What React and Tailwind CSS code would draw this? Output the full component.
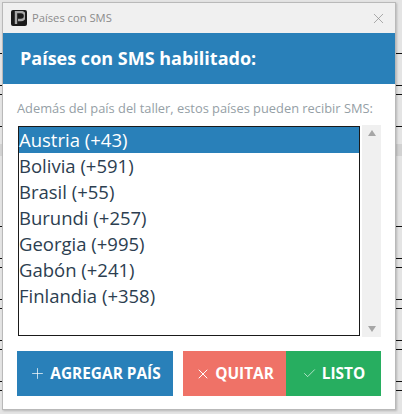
import React from 'react';
import { Plus, X, Check } from 'lucide-react';

const countries = [
  'Austria (+43)',
  'Bolivia (+591)',
  'Brasil (+55)',
  'Burundi (+257)',
  'Georgia (+995)',
  'Gabón (+241)',
  'Finlandia (+358)',
];

// rows of the table behind the dialog that peek out at both sides
const backgroundLines = [53, 85, 94, 126, 226, 258, 267, 299, 308, 340, 349, 381, 390];

const App = () => {
  return (
    <div className="relative w-[402px] h-[414px] overflow-hidden bg-[#e4e4e4] font-['Open_Sans',sans-serif]">
      {/* Background behind the dialog */}
      {backgroundLines.map((y) => (
        <div key={y} className="absolute left-0 w-full h-px bg-[#111111]" style={{ top: y }} />
      ))}
      <div className="absolute left-0 top-[144px] w-full h-[12px] bg-[#d2d2d2]" />

      {/* Dialog window */}
      <div className="absolute left-[2px] top-[2px] w-[394px] h-[408px] flex flex-col bg-white border border-[#b9b9b9] shadow-[1px_1px_2px_rgba(0,0,0,0.2)]">
        {/* Title bar */}
        <div className="h-[30px] flex items-center justify-between bg-[#f0f0f0] pl-[8px] pr-[8px] shrink-0">
          <div className="flex items-center gap-[5px]">
            <div className="w-[16px] h-[16px] rounded-[2px] bg-[#1b1b1b] flex items-center justify-center">
              <svg width="12" height="14" viewBox="0 0 12 14">
                <path d="M3 13V1h5a3.5 3.5 0 0 1 0 8H5" fill="none" stroke="#a8a8a8" strokeWidth="2.4" />
              </svg>
            </div>
            <span className="text-[11.2px] text-[#8c8c8c]">Países con SMS</span>
          </div>
          <X size={17} strokeWidth={1} className="text-[#8c8c8c]" />
        </div>

        {/* Blue header */}
        <div className="h-[51px] flex items-center bg-[#2980b9] pl-[17px] shrink-0">
          <h1 className="text-[18px] font-bold text-white">Países con SMS habilitado:</h1>
        </div>

        {/* Content */}
        <div className="flex-1 flex flex-col px-[14px]">
          <p className="mt-[15px] text-[12.85px] leading-[18px] whitespace-nowrap text-[#95a0a6]">
            Además del país del taller, estos países pueden recibir SMS:
          </p>

          <div className="mt-[8px] flex gap-[2px] h-[212px]">
            <div className="ml-px my-px w-[342px] border-[1.5px] border-[#1a1a1a] bg-white">
              {countries.map((name, i) => (
                <div
                  key={name}
                  className={`h-[26px] leading-[26px] text-[18.5px] ${
                    i === 0 ? 'bg-[#2980b9] text-white' : 'text-[#2c3e50]'
                  }`}
                >
                  {name}
                </div>
              ))}
            </div>
            <div className="w-[19px] flex flex-col items-center justify-between bg-[#f0f0f0] py-[5px]">
              <div className="w-0 h-0 border-x-[4.5px] border-x-transparent border-b-[6px] border-b-[#a6a6a6]" />
              <div className="w-0 h-0 border-x-[4.5px] border-x-transparent border-t-[6px] border-t-[#a6a6a6]" />
            </div>
          </div>

          {/* Buttons */}
          <div className="mt-[14px] flex h-[45px] w-[364px] text-white text-[15.4px] font-bold">
            <button className="w-[156px] flex items-center justify-center gap-[4px] bg-[#2980b9]">
              <Plus size={17} strokeWidth={1} />
              <span>AGREGAR PAÍS</span>
            </button>
            <button className="ml-[10px] w-[103px] flex items-center justify-center gap-[4px] bg-[#ef7267]">
              <X size={16} strokeWidth={1.5} />
              <span>QUITAR</span>
            </button>
            <button className="w-[95px] flex items-center justify-center gap-[5px] bg-[#27ae60]">
              <Check size={15} strokeWidth={1} />
              <span>LISTO</span>
            </button>
          </div>
        </div>
      </div>
    </div>
  );
};

export default App;
